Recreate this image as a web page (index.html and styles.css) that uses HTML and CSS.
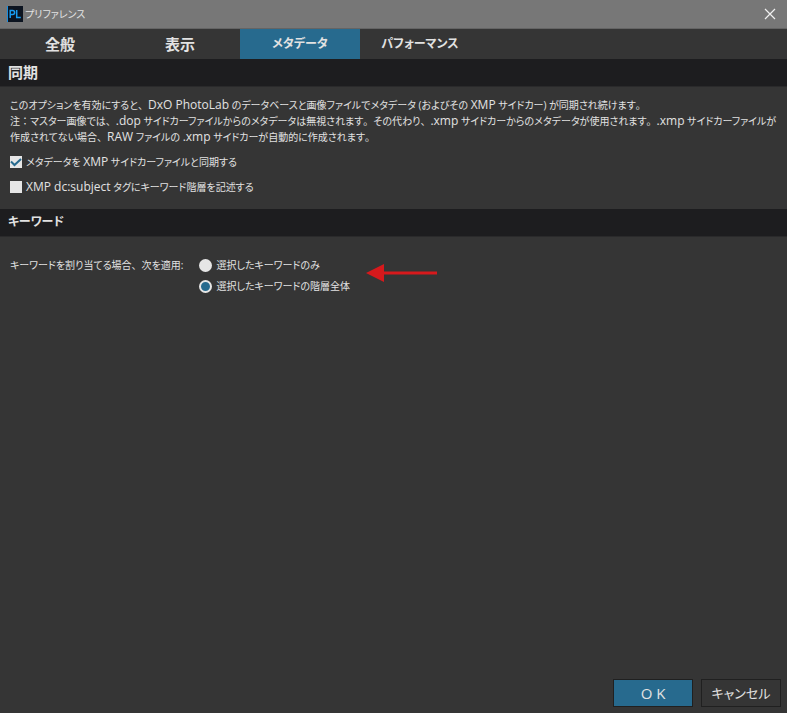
FILE: index.html
```
<!DOCTYPE html>
<html lang="ja">
<head>
  <meta charset="UTF-8">
  <meta name="viewport" content="width=device-width, initial-scale=1.0">
  <title>プリファレンス</title>
  <link rel="stylesheet" href="styles.css">
</head>
<body>
<header class="titlebar">
  <svg class="logo" viewBox="0 0 16 16" aria-hidden="true">
    <rect width="16" height="16" fill="#0c1420"/>
    <rect width="1" height="16" fill="#1a8fe0"/>
    <path d="M3.2 12V4.5H5.6Q7.6 4.5 7.6 6.5T5.6 8.6H3.2M9.7 4V11.4H13.8" fill="none" stroke="#189cf0" stroke-width="1.5"/>
  </svg>
  <h1>プリファレンス</h1>
  <button class="close" type="button" aria-label="閉じる">
    <svg viewBox="0 0 12 12"><path d="M1 1L11 11M11 1L1 11" fill="none" stroke="#f0f0f0" stroke-width="1.2"/></svg>
  </button>
</header>

<nav class="tabs">
  <button type="button">全般</button>
  <button type="button">表示</button>
  <button type="button" class="kana active">メタデータ</button>
  <button type="button" class="kana">パフォーマンス</button>
</nav>

<main>
  <h2>同期</h2>
  <section class="sync">
    <p>このオプションを有効にすると<span class="mark">、</span><span lang="en">DxO PhotoLab</span> のデータベースと画像ファイルでメタデータ (およびその <span lang="en">XMP</span> サイドカー) が同期され続けます<span class="mark">。</span><br>
    注<span class="mark">：</span>マスター画像では<span class="mark">、</span><span lang="en">.dop</span> サイドカーファイルからのメタデータは無視されます<span class="mark">。</span>その代わり<span class="mark">、</span><span lang="en">.xmp</span> サイドカーからのメタデータが使用されます<span class="mark">。</span><span lang="en">.xmp</span> サイドカーファイルが<br>
    作成されてない場合<span class="mark">、</span><span lang="en">RAW</span> ファイルの <span lang="en">.xmp</span> サイドカーが自動的に作成されます<span class="mark">。</span></p>
    <label class="option"><input type="checkbox" checked><span>メタデータを <span lang="en">XMP</span> サイドカーファイルと同期する</span></label>
    <label class="option"><input type="checkbox"><span><span lang="en">XMP dc:subject</span> タグにキーワード階層を記述する</span></label>
  </section>

  <h2 class="kana">キーワード</h2>
  <section class="keywords" role="radiogroup" aria-labelledby="assign">
    <span id="assign">キーワードを割り当てる場合<span class="mark">、</span>次を適用:</span>
    <div class="choices">
      <label><input type="radio" name="assign">選択したキーワードのみ</label>
      <label><input type="radio" name="assign" checked>選択したキーワードの階層全体</label>
    </div>
    <svg class="arrow" viewBox="0 0 72 20" aria-hidden="true">
      <path d="M0 10L18 1V8.500H71V11.500H18V19Z" fill="#d7191c"/>
    </svg>
  </section>
</main>

<footer>
  <button type="button" class="primary">O K</button>
  <button type="button" class="cancel">キャンセル</button>
</footer>
</body>
</html>
```
FILE: styles.css
```
* {
  box-sizing: border-box;
}
body {
  display: flex;
  flex-direction: column;
  min-height: 100vh;
  margin: 0;
  background-color: #353535;
  color: #e2e2e2;
  font-family: "Open Sans", "Noto Sans CJK JP", sans-serif;
  font-size: 10px;
  line-height: 16px;
  font-feature-settings: "palt";
}
button {
  padding: 0;
  border: 0;
  background: none;
  color: inherit;
  font: inherit;
  font-feature-settings: inherit;
}
h1, h2, p {
  margin: 0;
}
/* latin words are a step larger than the kana around them */
[lang="en"] {
  font-size: 12px;
}
/* punctuation keeps its full width */
.mark {
  font-feature-settings: normal;
}
.titlebar {
  display: flex;
  align-items: center;
  height: 29px;
  padding: 0 11px 0 7px;
  border-bottom: 1px solid #646464;
  background-color: #777;
}
.titlebar h1 {
  flex: 1;
  margin-left: 2px;
  font-size: 10px;
  font-weight: normal;
}
.logo {
  width: 16px;
  height: 16px;
}
.close {
  display: flex;
}
.close svg {
  width: 12px;
  height: 12px;
}
.tabs {
  display: flex;
  height: 30px;
}
.tabs button {
  width: 120px;
  font-size: 15px;
  font-weight: 700;
}
.tabs .active {
  background-color: #276a8e;
}
h2 {
  height: 28px;
  padding-left: 8px;
  border-bottom: 1px solid #2a2a2b;
  background-color: #1d1d1f;
  font-size: 15px;
  font-weight: 700;
  line-height: 26px;
}
.tabs .kana, h2.kana {
  font-size: 12px;
}
.sync {
  padding: 10px 10px 14px;
}
.option {
  display: flex;
  align-items: center;
  width: fit-content;
  margin-top: 9px;
}
input {
  appearance: none;
  margin: 0;
  background-color: #e6e6e6;
}
input[type="checkbox"] {
  width: 12px;
  height: 12px;
  margin-right: 4px;
}
input[type="checkbox"]:checked {
  background-image: url("data:image/svg+xml,%3Csvg xmlns='http://www.w3.org/2000/svg' viewBox='0 0 12 12'%3E%3Cpath d='M1 5.500L4.500 9L11 3' fill='none' stroke='%23276a8e' stroke-width='2'/%3E%3C/svg%3E");
}
.keywords {
  display: flex;
  align-items: flex-start;
  padding: 20px 10px;
}
.choices {
  display: flex;
  flex-direction: column;
  gap: 5px;
  margin-left: 16px;
}
.choices label {
  display: flex;
  align-items: center;
}
input[type="radio"] {
  width: 13px;
  height: 13px;
  margin-right: 4px;
  border-radius: 50%;
}
input[type="radio"]:checked {
  border: 2px solid #e6e6e6;
  background-color: #276a8e;
}
.arrow {
  width: 72px;
  height: 20px;
  margin: 6px 0 0 16px;
}
footer {
  display: flex;
  justify-content: flex-end;
  gap: 8px;
  margin-top: auto;
  padding: 6px;
}
footer button {
  width: 80px;
  height: 28px;
  border: 1px solid #202020;
  font-size: 15px;
}
footer .primary {
  background-color: #276a8e;
}
footer .cancel {
  font-size: 13px;
}
```
